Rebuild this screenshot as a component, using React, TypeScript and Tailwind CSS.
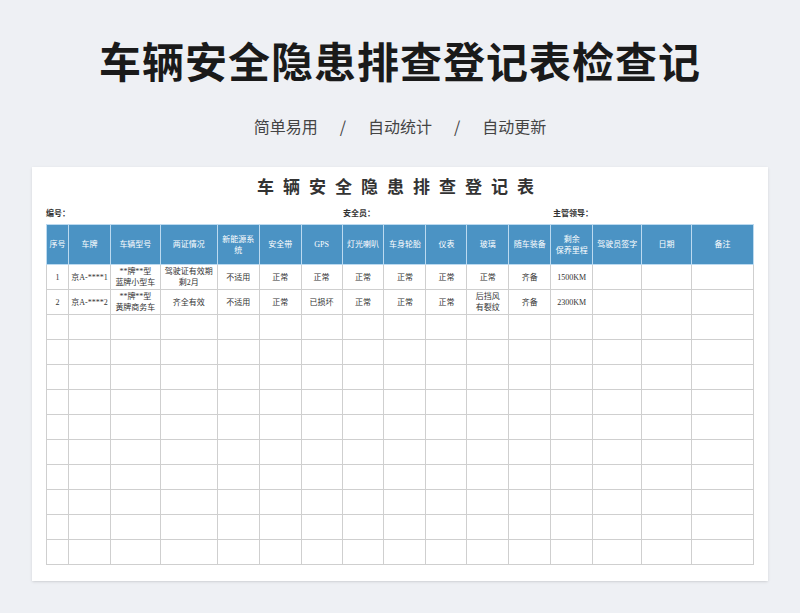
import React from "react";

const cols = [22, 42, 50, 57, 42, 42, 41, 42, 42, 41, 42, 42, 42, 49, 50, 62];
const heads = ["序号", "车牌", "车辆型号", "两证情况", "新能源系统", "安全带", "GPS", "灯光喇叭", "车身轮胎", "仪表", "玻璃", "随车装备", "剩余\n保养里程", "驾驶员签字", "日期", "备注"];
const rows: string[][] = [
  ["1", "京A-****1", "**牌**型\n蓝牌小型车", "驾驶证有效期\n剩2月", "不适用", "正常", "正常", "正常", "正常", "正常", "正常", "齐备", "1500KM", "", "", ""],
  ["2", "京A-****2", "**牌**型\n黄牌商务车", "齐全有效", "不适用", "正常", "已损坏", "正常", "正常", "正常", "后挡风\n有裂纹", "齐备", "2300KM", "", "", ""],
];
while (rows.length < 12) rows.push(Array(16).fill(""));

const serif = { fontFamily: '"Liberation Serif", "Noto Sans CJK SC", serif' };

export default function App() {
  return (
    <div className="w-[800px] h-[613px] bg-[#eef0f4] overflow-hidden" style={{ fontFamily: '"Noto Sans CJK SC", sans-serif' }}>
      <h1 className="text-center text-[42px] font-bold text-[#1a1a1a] pt-[30px] leading-[60px] tracking-[1px]">车辆安全隐患排查登记表检查记</h1>
      <div className="flex justify-center gap-[22px] text-[16px] text-[#444] mt-[24px] leading-[24px]">
        <span>简单易用</span><span>/</span><span>自动统计</span><span>/</span><span>自动更新</span>
      </div>
      <div className="mx-[32px] mt-[29px] h-[414px] bg-white shadow-sm px-[14px] pt-[10px]">
        <div className="text-center text-[17px] font-bold text-[#333] tracking-[9px] leading-[22px]" style={serif}>车辆安全隐患排查登记表</div>
        <div className="flex text-[8px] text-[#333] font-bold mt-[8px] leading-[12px]">
          <span className="w-[297px]">编号：</span>
          <span className="w-[210px]">安全员：</span>
          <span>主管领导：</span>
        </div>
        <table className="mt-[5px] border-collapse table-fixed text-[8px]" style={serif}>
          <colgroup>{cols.map((w, i) => <col key={i} style={{ width: w }} />)}</colgroup>
          <thead>
            <tr className="h-[40px] bg-[#4b93c4] text-white">
              {heads.map((h, i) => (
                <th key={i} className="border border-[#bcdaf0] font-normal whitespace-pre-line leading-[11px] px-[1px]">{h}</th>
              ))}
            </tr>
          </thead>
          <tbody>
            {rows.map((r, ri) => (
              <tr key={ri} className="h-[25px] text-[#333]">
                {r.map((c, ci) => (
                  <td key={ci} className="border border-[#cfcfcf] text-center whitespace-pre-line leading-[11px] p-0">{c}</td>
                ))}
              </tr>
            ))}
          </tbody>
        </table>
      </div>
    </div>
  );
}
